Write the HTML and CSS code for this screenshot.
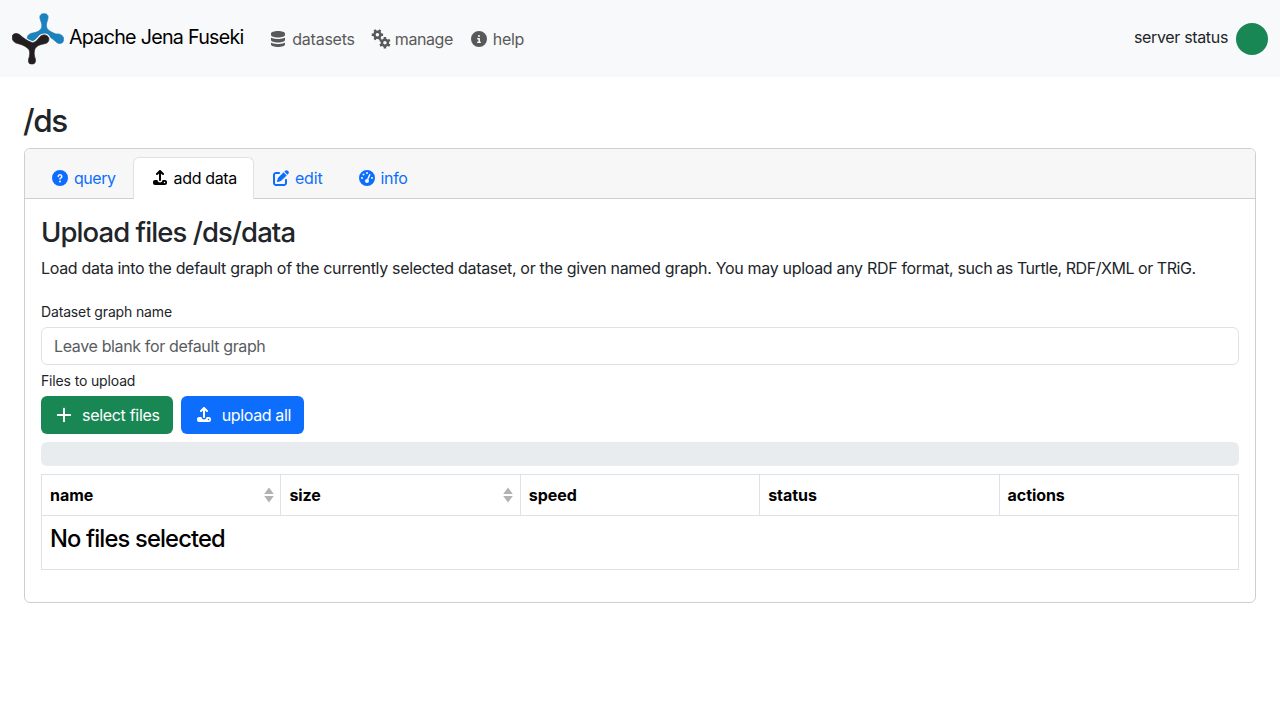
FILE: index.html
```html
<!DOCTYPE html>
<html lang="en">
<head>
<meta charset="utf-8">
<title>Apache Jena Fuseki</title>
<link rel="stylesheet" href="styles.css">
</head>
<body>
<nav class="navbar">
  <a class="brand">
    <svg class="logo" viewBox="36 38 156 156">
      <path class="logo-back" d="M121 58C117 45 122 40 132 40C142 40 147 45 143 58C139 68 138 76 141 84C145 91 155 96 168 101C183 99 191 107 191 117C191 129 180 133 171 127C158 116 148 106 132 104C118 106 112 112 106 121C98 130 85 127 82 117C80 105 88 100 98 98C112 96 120 91 124 84C127 76 125 68 121 58Z"/>
      <path class="logo-halo" d="M38 104C43 98 53 98 60 104C70 113 82 122 97 127C108 126 112 118 120 109C128 101 142 102 146 112C149 124 141 130 130 131C114 134 107 140 104 148C101 158 103 166 106 176C108 187 104 191 96 191C87 191 84 187 86 176C89 166 91 156 87 148C80 139 70 134 55 130C42 128 33 118 38 104Z"/>
      <path class="logo-front" d="M38 104C43 98 53 98 60 104C70 113 82 122 97 127C108 126 112 118 120 109C128 101 142 102 146 112C149 124 141 130 130 131C114 134 107 140 104 148C101 158 103 166 106 176C108 187 104 191 96 191C87 191 84 187 86 176C89 166 91 156 87 148C80 139 70 134 55 130C42 128 33 118 38 104Z"/>
    </svg>
    <span class="brand-text">Apache Jena Fuseki</span>
  </a>
  <div class="nav-links">
    <a class="nav-link datasets"><svg class="icon" viewBox="-96 0 640 512"><path d="M448 205.8c-14.8 9.8-31.8 17.7-49.5 24-47 16.8-108.7 26.2-174.5 26.2S96.4 246.5 49.5 229.8c-17.6-6.3-34.7-14.2-49.5-24L0 288c0 44.2 100.3 80 224 80s224-35.8 224-80l0-82.2zm0-77.8l0-48C448 35.8 347.7 0 224 0S0 35.8 0 80l0 48c0 44.2 100.3 80 224 80s224-35.8 224-80zM398.5 389.8C351.6 406.5 289.9 416 224 416S96.4 406.5 49.5 389.8c-17.6-6.3-34.7-14.2-49.5-24L0 432c0 44.2 100.3 80 224 80s224-35.8 224-80l0-66.2c-14.8 9.8-31.8 17.7-49.5 24z"/></svg><span>datasets</span></a>
    <a class="nav-link manage"><svg class="icon gears" viewBox="0 0 20 20">
      <g transform="translate(6.4 5.8) rotate(90)"><circle r="3"/><path d="M0 -5.7V-3M0 5.7V3M4.94 -2.85L2.6 -1.5M-4.94 2.85L-2.6 1.5M4.94 2.85L2.6 1.5M-4.94 -2.85L-2.6 -1.5"/></g>
      <g transform="translate(13.9 13.8)"><circle r="3"/><path d="M0 -5.7V-3M0 5.7V3M4.94 -2.85L2.6 -1.5M-4.94 2.85L-2.6 1.5M4.94 2.85L2.6 1.5M-4.94 -2.85L-2.6 -1.5"/></g>
    </svg><span>manage</span></a>
    <a class="nav-link help"><svg class="icon" viewBox="-64 0 640 512"><path d="M256 512a256 256 0 1 0 0-512 256 256 0 1 0 0 512zM224 160a32 32 0 1 1 64 0 32 32 0 1 1 -64 0zm-8 64l48 0c13.3 0 24 10.7 24 24l0 88 8 0c13.3 0 24 10.7 24 24s-10.7 24-24 24l-80 0c-13.3 0-24-10.7-24-24s10.7-24 24-24l24 0 0-64-24 0c-13.3 0-24-10.7-24-24s10.7-24 24-24z"/></svg><span>help</span></a>
  </div>
  <div class="status"><span class="status-text">server status</span><span class="status-dot"></span></div>
</nav>
<main class="page">
  <h2 class="title">/ds</h2>
  <section class="card">
    <div class="card-header">
      <a class="tab query"><svg class="icon" viewBox="-64 0 640 512"><path d="M256 512a256 256 0 1 0 0-512 256 256 0 1 0 0 512zm0-336c-17.7 0-32 14.3-32 32 0 13.3-10.7 24-24 24s-24-10.7-24-24c0-44.2 35.8-80 80-80s80 35.8 80 80c0 47.2-36 67.2-56 74.5l0 3.8c0 13.3-10.7 24-24 24s-24-10.7-24-24l0-8.1c0-20.5 14.8-35.2 30.1-40.2 6.4-2.1 13.2-5.5 18.2-10.3 4.3-4.2 7.7-10 7.7-19.6 0-17.7-14.3-32-32-32zM224 368a32 32 0 1 1 64 0 32 32 0 1 1 -64 0z"/></svg><span>query</span></a>
      <a class="tab active"><svg class="icon" viewBox="-96 0 640 512"><path d="M256 109.3L256 320c0 17.7-14.3 32-32 32s-32-14.3-32-32l0-210.7-41.4 41.4c-12.5 12.5-32.8 12.5-45.3 0s-12.5-32.8 0-45.3l96-96c12.5-12.5 32.8-12.5 45.3 0l96 96c12.5 12.5 12.5 32.8 0 45.3s-32.8 12.5-45.3 0L256 109.3zM224 400c44.2 0 80-35.8 80-80l80 0c35.3 0 64 28.7 64 64l0 32c0 35.3-28.7 64-64 64L64 480c-35.3 0-64-28.7-64-64l0-32c0-35.3 28.7-64 64-64l80 0c0 44.2 35.8 80 80 80zm144 24a24 24 0 1 0 0-48 24 24 0 1 0 0 48z"/></svg><span>add data</span></a>
      <a class="tab edit"><svg class="icon" viewBox="-64 0 640 512"><path d="M471.6 21.7c-21.9-21.9-57.3-21.9-79.2 0L362.3 51.7l97.9 97.9 30.1-30.1c21.9-21.9 21.9-57.3 0-79.2L471.6 21.7zm-299.2 220c-6.1 6.1-10.8 13.6-13.5 21.9l-29.6 88.8c-2.9 8.6-.6 18.1 5.8 24.6s15.9 8.7 24.6 5.8l88.8-29.6c8.2-2.7 15.7-7.4 21.9-13.5L437.7 172.3 339.7 74.3 172.4 241.7zM96 64C43 64 0 107 0 160V416c0 53 43 96 96 96H352c53 0 96-43 96-96V320c0-17.7-14.3-32-32-32s-32 14.3-32 32v96c0 17.7-14.3 32-32 32H96c-17.7 0-32-14.3-32-32V160c0-17.7 14.3-32 32-32h96c17.7 0 32-14.3 32-32s-14.3-32-32-32H96z"/></svg><span>edit</span></a>
      <a class="tab info"><svg class="icon" viewBox="-64 0 640 512"><path d="M0 256a256 256 0 1 1 512 0A256 256 0 1 1 0 256zM288 96a32 32 0 1 0 -64 0 32 32 0 1 0 64 0zM256 416c35.3 0 64-28.7 64-64c0-17.4-6.9-33.1-18.1-44.6L366 161.7c5.3-12.1-.2-26.3-12.3-31.6s-26.3 .2-31.6 12.3L257.9 288c-.6 0-1.3 0-1.9 0c-35.3 0-64 28.7-64 64s28.7 64 64 64zM176 144a32 32 0 1 0 -64 0 32 32 0 1 0 64 0zM96 288a32 32 0 1 0 0-64 32 32 0 1 0 0 64zm352-32a32 32 0 1 0 -64 0 32 32 0 1 0 64 0z"/></svg><span>info</span></a>
    </div>
    <div class="card-body">
      <h3 class="heading">Upload files /ds/data</h3>
      <p class="lead">Load data into the default graph of the currently selected dataset, or the given named graph. You may upload any RDF format, <span class="formats">such as Turtle, RDF/XML or TRiG.</span></p>
      <label class="label" for="graph">Dataset graph name</label>
      <input class="input" id="graph" placeholder="Leave blank for default graph">
      <div class="label files">Files to upload</div>
      <div class="buttons">
        <button class="btn green"><svg class="icon" viewBox="0 0 20 16"><path class="plus" d="M10 1.8V14.2M3.8 8H16.2"/></svg><span>select files</span></button>
        <button class="btn blue"><svg class="icon" viewBox="-96 0 640 512"><path d="M256 109.3L256 320c0 17.7-14.3 32-32 32s-32-14.3-32-32l0-210.7-41.4 41.4c-12.5 12.5-32.8 12.5-45.3 0s-12.5-32.8 0-45.3l96-96c12.5-12.5 32.8-12.5 45.3 0l96 96c12.5 12.5 12.5 32.8 0 45.3s-32.8 12.5-45.3 0L256 109.3zM224 400c44.2 0 80-35.8 80-80l80 0c35.3 0 64 28.7 64 64l0 32c0 35.3-28.7 64-64 64L64 480c-35.3 0-64-28.7-64-64l0-32c0-35.3 28.7-64 64-64l80 0c0 44.2 35.8 80 80 80zm144 24a24 24 0 1 0 0-48 24 24 0 1 0 0 48z"/></svg><span>upload all</span></button>
      </div>
      <div class="progress"></div>
      <table class="table">
        <thead><tr>
          <th><div class="th">name<svg class="sort" viewBox="0 0 10 16"><path d="M5 .5L9.8 7H.2ZM5 15.5L9.8 9H.2Z"/></svg></div></th>
          <th><div class="th">size<svg class="sort" viewBox="0 0 10 16"><path d="M5 .5L9.8 7H.2ZM5 15.5L9.8 9H.2Z"/></svg></div></th>
          <th>speed</th><th>status</th><th>actions</th>
        </tr></thead>
        <tbody><tr><td colspan="5"><h4 class="empty">No files selected</h4></td></tr></tbody>
      </table>
    </div>
  </section>
</main>
</body>
</html>
```
FILE: styles.css
```css
*{box-sizing:border-box}
body{margin:0;background:#fff;color:#212529;font:16px/24px Inter,"Liberation Sans",sans-serif}
h2,h3,h4,p{margin:0}
.navbar{height:77px;background:#f8f9fa;display:flex;align-items:center;padding:0 12px}
.brand{display:flex;align-items:center;gap:5px;color:#000;font-size:19.7px;letter-spacing:-.73px;margin-right:24.6px}
.brand-text{padding-bottom:4px}
.logo{width:52px;height:52px;display:block}
.logo-back{fill:#1c81bd;stroke:#1c81bd;stroke-width:2}
.logo-halo{fill:none;stroke:#f8f9fa;stroke-width:9}
.logo-front{fill:#231f20;stroke:#231f20;stroke-width:2}
.nav-links{display:flex;gap:16px;color:#595959}
.nav-link{display:flex;align-items:center;gap:4px}
.datasets{letter-spacing:-.23px}
.manage{letter-spacing:-.42px}
.help{letter-spacing:-.36px}
.icon{width:20px;height:16px;fill:currentColor;flex:none}
.gears{height:20px;fill:none;stroke:currentColor;stroke-width:2.5}
.status{margin-left:auto;display:flex;align-items:center;gap:8px;letter-spacing:-.34px}
.status-text{padding-bottom:4px}
.status-dot{width:32px;height:32px;border-radius:50%;background:#198754}
.page{padding:25px 24px 0}
.title{font-size:31.5px;line-height:38.4px;font-weight:500;letter-spacing:-1.4px;margin:0 0 8px -1px}
.card{border:1px solid #cfcfcf;border-radius:6px;height:455px}
.card-header{height:50px;background:#f7f7f7;border-bottom:1px solid #cfcfcf;border-radius:5px 5px 0 0;padding:8px 8px 0;display:flex}
.tab{display:flex;align-items:center;gap:4px;color:#0d6efd;height:42px;border:1px solid transparent;border-bottom:0;padding:0 16px 2px}
.query{letter-spacing:-.45px}
.tab.active{background:#fff;color:#000;border-color:#dee2e6;border-radius:6px 6px 0 0;letter-spacing:-.36px}
.edit{letter-spacing:-.15px}
.info{letter-spacing:-.35px}
.card-body{padding:17px 16px 16px}
.heading{font-size:27.5px;line-height:32.6px;font-weight:500;letter-spacing:-.93px;margin-bottom:7.4px}
.lead{white-space:nowrap;letter-spacing:-.318px;margin-bottom:21px}
.formats{letter-spacing:-.45px}
.label{display:block;font-size:14px;line-height:21px;letter-spacing:-.15px;margin-bottom:5px}
.files{margin-top:5px}
.input{display:block;width:100%;height:38px;border:1px solid #dee2e6;border-radius:6px;padding:0 12px;font:inherit;letter-spacing:-.36px}
.input::placeholder{color:#595c5f;opacity:1}
.buttons{display:flex;gap:8px}
.btn{display:flex;align-items:center;gap:8px;height:38px;border:0;border-radius:6px;color:#fff;padding:0 13px;font:inherit;letter-spacing:-.3px}
.green{background:#198754}
.blue{background:#0d6efd;letter-spacing:-.36px}
.plus{stroke:currentColor;stroke-width:2;stroke-linecap:round}
.progress{height:24px;background:#e9ecef;border-radius:6px;margin:8px 0}
.table{width:100%;table-layout:fixed;border-collapse:collapse;color:#000}
.table th,.table td{border:1px solid #dee2e6;padding:8px;text-align:left}
.table th{font-weight:700;letter-spacing:-.06px}
.th{display:flex;justify-content:space-between;align-items:center}
.sort{width:10px;height:16px;fill:#b2b2b2;margin-right:-1.6px}
.empty{font-size:23.7px;line-height:30.8px;height:28.8px;font-weight:500;letter-spacing:-.84px;margin-bottom:8px}
```
